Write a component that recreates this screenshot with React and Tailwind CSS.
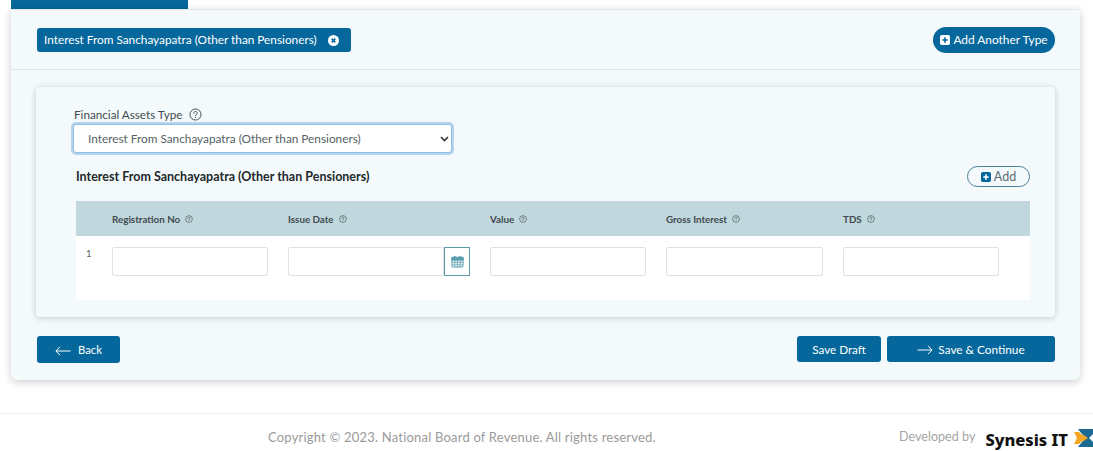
import React from 'react';

const Help = ({ size = 13, color = '#3f4a50' }) => (
  <svg width={size} height={size} viewBox="0 0 16 16" fill="none" stroke={color} strokeWidth="1.2" className="shrink-0">
    <circle cx="8" cy="8" r="6.8" />
    <path d="M5.8 6.3c0-1.3 1-2 2.2-2s2.2.8 2.2 1.9c0 1.6-2.2 1.6-2.2 3.2" strokeLinecap="round" />
    <circle cx="8" cy="11.6" r="0.7" fill={color} stroke="none" />
  </svg>
);

const PlusSquare = ({ size = 13, color = '#fff', plus = '#05679b' }) => (
  <svg width={size} height={size} viewBox="0 0 14 14" className="shrink-0">
    <rect x="0" y="0" width="14" height="14" rx="2.5" fill={color} />
    <path d="M7 3.2v7.6M3.2 7h7.6" stroke={plus} strokeWidth="2.2" />
  </svg>
);

const Calendar = () => (
  <svg width="13" height="13" viewBox="0 0 14 14" fill="none" stroke="#5a9fb0" strokeWidth="1">
    <rect x="1" y="2.5" width="12" height="10.5" rx="1" fill="#e6f1f4" />
    <rect x="1" y="2.5" width="12" height="3" fill="#5a9fb0" />
    <path d="M1 8h12M1 10.5h12M4 5.5V13M7 5.5V13M10 5.5V13" strokeWidth="0.7" />
    <path d="M4 1v2.5M10 1v2.5" strokeWidth="1.5" />
  </svg>
);

const Arrow = ({ left }) => (
  <svg width="16" height="10" viewBox="0 0 16 10" fill="none" stroke="#fff" strokeWidth="1" className="shrink-0">
    {left ? <path d="M15.5 5H1M5 .8L.9 5 5 9.2" /> : <path d="M.5 5H15M11 .8L15.1 5 11 9.2" />}
  </svg>
);

const columns = [
  { label: 'Registration No', date: false },
  { label: 'Issue Date', date: true },
  { label: 'Value', date: false },
  { label: 'Gross Interest', date: false },
  { label: 'TDS', date: false },
];

const gridCols = 'grid grid-cols-[16px_156px_182px_156px_157px_156px] gap-x-[20px]';

const App = () => {
  return (
    <div className="relative h-[451px] w-[1093px] overflow-hidden bg-white font-['Lato','Open_Sans',sans-serif] text-[#3f4a50]">
      {/* active tab strip */}
      <div className="h-[9px] w-[177px] ml-[11px] bg-[#05679b]" />

      <div className="ml-[11px] w-[1069px] h-[371px] rounded-b-md border-t border-[#e3e8ea] bg-[#f4fafb] shadow-[0_2px_8px_rgba(0,0,0,0.2)]">
        {/* selected types */}
        <div className="flex h-[60px] items-center justify-between border-b border-[#dfe5e7] pl-[26px] pr-[25px]">
          <div className="flex h-[24px] w-[314px] items-center rounded-[3px] bg-[#05679b] pl-[7px] pt-[1px] text-[11.8px] text-white">
            <span className="whitespace-nowrap">Interest From Sanchayapatra (Other than Pensioners)</span>
            <svg width="11" height="11" viewBox="0 0 12 12" className="ml-[11px] shrink-0">
              <circle cx="6" cy="6" r="6" fill="#fff" />
              <path d="M4 4l4 4M8 4l-4 4" stroke="#05679b" strokeWidth="1.7" />
            </svg>
          </div>
          <button className="flex h-[26px] w-[122px] items-center justify-center gap-[3px] rounded-full bg-[#05679b] pt-[1px] text-[11.9px] whitespace-nowrap text-white">
            <PlusSquare size={10} />
            Add Another Type
          </button>
        </div>

        {/* form card */}
        <div className="mx-[25px] mt-[17px] h-[230px] rounded-[4px] bg-[#f4fafb] shadow-[0_1px_6px_rgba(0,0,0,0.2)] pt-[19px]">
          <div className="ml-[38px] flex items-center gap-[6px] text-[11.7px] leading-[16px]">
            Financial Assets Type <Help />
          </div>
          <div className="relative ml-[37px] mt-[2px] w-[379px]">
            <select className="h-[29px] w-full appearance-none rounded-[3px] border border-[#8fbfe6] bg-white pl-[14px] pt-[1px] text-[11.8px] text-[#555f64] shadow-[0_0_0_2px_rgba(130,180,225,0.55)] outline-none">
              <option>Interest From Sanchayapatra (Other than Pensioners)</option>
            </select>
            <svg width="9" height="6" viewBox="0 0 9 6" fill="none" stroke="#333" strokeWidth="1.6" className="pointer-events-none absolute right-[3px] top-[12px]">
              <path d="M1 1l3.5 3.5L8 1" />
            </svg>
          </div>

          <div className="mt-[13px] flex items-center justify-between pl-[40px] pr-[25px]">
            <h3 className="pt-[2px] text-[12.5px] font-bold text-[#22282b]">Interest From Sanchayapatra (Other than Pensioners)</h3>
            <button className="flex h-[21px] w-[63px] items-center justify-center gap-[3px] rounded-full border border-[#4b7f9c] text-[12.5px] text-[#5b6b74]">
              <PlusSquare size={10} color="#05679b" plus="#fff" />
              <span className="pt-[1px]">Add</span>
            </button>
          </div>

          <div className="mx-[40px] mt-[14px] w-[954px]">
            <div className={`${gridCols} h-[35px] items-center bg-[#c1d7de] pt-[1px] text-[9.8px] font-bold text-[#3f4a50]`}>
              <span />
              {columns.map((col) => (
                <div key={col.label} className="flex items-center gap-[5px]">
                  {col.label} <Help size={8} />
                </div>
              ))}
            </div>
            <div className={`${gridCols} h-[64px] bg-white pt-[11px]`}>
              <span className="pl-[10px] text-[9.5px] leading-[14px] text-[#555f64]">1</span>
              {columns.map((col) => (
                <div key={col.label} className="flex h-[29px]">
                  <input className="h-full min-w-0 flex-1 rounded-[2px] border border-[#dfe2e3] bg-white" />
                  {col.date && (
                    <span className="flex h-full w-[26px] items-center justify-center border border-[#5a9aa6] bg-white">
                      <Calendar />
                    </span>
                  )}
                </div>
              ))}
            </div>
          </div>
        </div>

        {/* actions */}
        <div className="mt-[19px] flex justify-between pl-[26px] pr-[25px]">
          <button className="flex h-[27px] w-[83px] items-center justify-center gap-[7px] rounded-[3px] bg-[#05679b] pt-[2px] text-[11.3px] text-white">
            <Arrow left />
            Back
          </button>
          <div className="flex gap-[6px]">
            <button className="h-[26px] w-[84px] rounded-[3px] bg-[#05679b] pt-[1px] text-[11.7px] text-white">Save Draft</button>
            <button className="flex h-[26px] w-[168px] items-center justify-center gap-[5px] rounded-[3px] bg-[#05679b] pt-[1px] text-[11.8px] text-white">
              <Arrow />
              Save &amp; Continue
            </button>
          </div>
        </div>
      </div>

      {/* footer */}
      <footer className="mt-[33px] flex h-[38px] items-start border-t border-[#eeeeee] pt-[14px]">
        <span className="ml-[268px] text-[13px] leading-[18px] tracking-[0.2px] text-[#9a9a9a]">Copyright © 2023. National Board of Revenue. All rights reserved.</span>
        <span className="ml-auto text-[12.6px] leading-[18px] text-[#a5a5a5]">Developed by</span>
        <span className="ml-[10px] font-['Noto_Sans',sans-serif] text-[16.5px] leading-[24px] font-extrabold text-[#111]">Synesis IT</span>
        <svg width="19" height="18" viewBox="0 0 19 18" className="ml-[6px] mt-[1px] shrink-0">
          <path d="M0 3h5l6 6-6 6H0l3-6z" fill="#f5a623" />
          <path d="M4 0h15v5l-4 4 4 4v5H4l7-9z" fill="#1b6a93" />
          <path d="M8 5l6 4-6 4 2-4z" fill="#f5a623" />
        </svg>
      </footer>
    </div>
  );
};

export default App;
